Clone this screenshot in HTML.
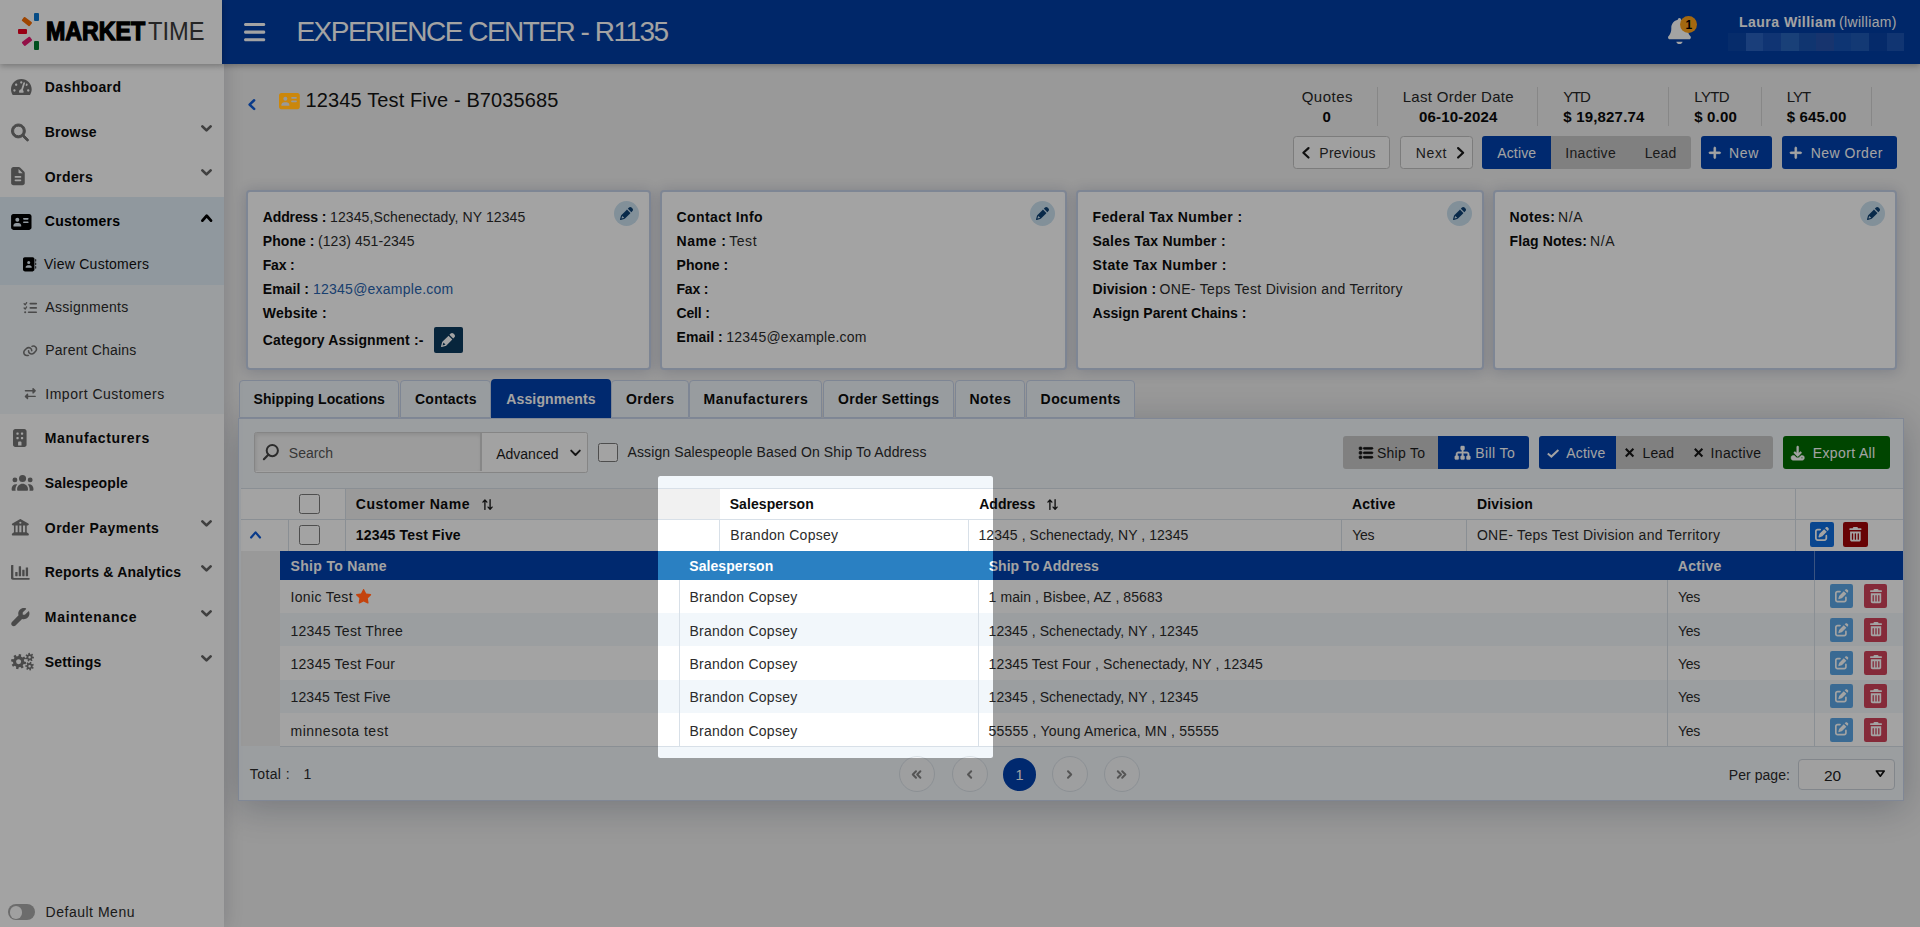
<!DOCTYPE html>
<html lang="en"><head><meta charset="utf-8"><title>MarketTime - Customer Assignments</title>
<style>
html,body{margin:0;padding:0;}
body{width:1920px;height:927px;overflow:hidden;position:relative;background:#efefef;font-family:"Liberation Sans",sans-serif;font-size:14px;}
svg{display:block;overflow:visible;}
</style></head><body>
<nav style="position:absolute;left:0px;top:0px;width:223.6px;height:927px;background:#fff;box-shadow:0 0 18px rgba(0,0,30,.17);z-index:3;"><div style="position:absolute;left:0px;top:197.4px;width:224px;height:87.7px;background:#e2eef8;"></div><div style="position:absolute;left:0px;top:285.1px;width:224px;height:128.9px;background:#f3f7fa;"></div><svg style="position:absolute;left:11.1px;top:78.9px;width:20.7px;height:16.1px;" viewBox="0 32 576 448" preserveAspectRatio="xMidYMid meet"><path fill="#757575" d="M288 32C128.94 32 0 160.94 0 320c0 52.8 14.25 102.26 39.06 144.8 5.61 9.62 16.3 15.2 27.44 15.2h443c11.14 0 21.83-5.58 27.44-15.2C561.75 422.26 576 372.8 576 320c0-159.06-128.94-288-288-288zm0 64c14.71 0 26.58 10.13 30.32 23.65-1.11 2.26-2.64 4.23-3.45 6.67l-9.22 27.67c-5.13 3.49-10.97 6.01-17.64 6.01-17.67 0-32-14.33-32-32S270.33 96 288 96zM96 384c-17.67 0-32-14.33-32-32s14.33-32 32-32 32 14.33 32 32-14.33 32-32 32zm48-160c-17.67 0-32-14.33-32-32s14.33-32 32-32 32 14.33 32 32-14.33 32-32 32zm246.77-72.41l-61.33 184C343.13 347.33 352 364.54 352 384c0 11.72-3.38 22.55-8.88 32H232.88c-5.5-9.45-8.88-20.28-8.88-32 0-33.94 26.5-61.43 59.9-63.59l61.34-184.01c4.17-12.56 17.73-19.45 30.36-15.17 12.57 4.19 19.35 17.79 15.17 30.36zm14.66 57.2l15.52-46.55c3.47-1.29 7.13-2.23 11.05-2.23 17.67 0 32 14.33 32 32s-14.33 32-32 32c-11.38-.01-20.89-6.28-26.57-15.22zM480 384c-17.67 0-32-14.33-32-32s14.33-32 32-32 32 14.33 32 32-14.33 32-32 32z"/></svg><span style="position:absolute;left:44.8px;top:77.2px;line-height:20px;font-size:14px;font-weight:700;color:#0c0c0c;white-space:pre;letter-spacing:0.383px;">Dashboard</span><svg style="position:absolute;left:11.4px;top:123.7px;width:18.0px;height:17.1px;" viewBox="0 0 511.97 512.08" preserveAspectRatio="xMidYMid meet"><path fill="#757575" d="M416 208c0 45.9-14.9 88.3-40 122.7l126.6 126.7c12.5 12.5 12.5 32.8 0 45.3s-32.8 12.5-45.3 0L330.7 376c-34.4 25.1-76.8 40-122.7 40C93.1 416 0 322.9 0 208S93.1 0 208 0s208 93.1 208 208M208 352a144 144 0 1 0 0-288 144 144 0 1 0 0 288" stroke="#757575" stroke-width="28" stroke-linejoin="round"/></svg><span style="position:absolute;left:44.8px;top:122.0px;line-height:20px;font-size:14px;font-weight:700;color:#0c0c0c;white-space:pre;letter-spacing:0.216px;">Browse</span><svg style="position:absolute;left:201.0px;top:124.6px;width:11.0px;height:7.1px" viewBox="0 0 11.0 7.1"><path d="M1.35 1.35L5.5 5.4125L9.65 1.35" fill="none" stroke="#646464" stroke-width="2.7" stroke-linecap="round" stroke-linejoin="round"/></svg><svg style="position:absolute;left:11.3px;top:167.4px;width:13.9px;height:18.2px;" viewBox="0 0 384 512" preserveAspectRatio="xMidYMid meet"><path fill="#757575" d="M0 64C0 28.7 28.7 0 64 0h149.5c17 0 33.3 6.7 45.3 18.7l106.5 106.6c12 12 18.7 28.3 18.7 45.3V448c0 35.3-28.7 64-64 64H64c-35.3 0-64-28.7-64-64zm208-5.5V152c0 13.3 10.7 24 24 24h93.5zM120 256c-13.3 0-24 10.7-24 24s10.7 24 24 24h144c13.3 0 24-10.7 24-24s-10.7-24-24-24zm0 96c-13.3 0-24 10.7-24 24s10.7 24 24 24h144c13.3 0 24-10.7 24-24s-10.7-24-24-24z"/></svg><span style="position:absolute;left:44.8px;top:166.7px;line-height:20px;font-size:14px;font-weight:700;color:#0c0c0c;white-space:pre;letter-spacing:0.406px;">Orders</span><svg style="position:absolute;left:201.0px;top:169.3px;width:11.0px;height:7.1px" viewBox="0 0 11.0 7.1"><path d="M1.35 1.35L5.5 5.4125L9.65 1.35" fill="none" stroke="#646464" stroke-width="2.7" stroke-linecap="round" stroke-linejoin="round"/></svg><svg style="position:absolute;left:11.4px;top:213.9px;width:20.6px;height:15.9px;" viewBox="0 32 576 448" preserveAspectRatio="xMidYMid meet"><path fill="#000" d="M64 32C28.7 32 0 60.7 0 96v320c0 35.3 28.7 64 64 64h448c35.3 0 64-28.7 64-64V96c0-35.3-28.7-64-64-64zm80 256h64c44.2 0 80 35.8 80 80 0 8.8-7.2 16-16 16H80c-8.8 0-16-7.2-16-16 0-44.2 35.8-80 80-80m-24-96a56 56 0 1 1 112 0 56 56 0 1 1-112 0m240-48h112c13.3 0 24 10.7 24 24s-10.7 24-24 24H360c-13.3 0-24-10.7-24-24s10.7-24 24-24m0 96h112c13.3 0 24 10.7 24 24s-10.7 24-24 24H360c-13.3 0-24-10.7-24-24s10.7-24 24-24"/></svg><span style="position:absolute;left:44.8px;top:211.4px;line-height:20px;font-size:14px;font-weight:700;color:#000;white-space:pre;letter-spacing:0.254px;">Customers</span><svg style="position:absolute;left:201.0px;top:213.8px;width:11.4px;height:8.0px" viewBox="0 0 11.4 8.0"><path d="M1.4 6.6L5.7 1.75L10.0 6.6" fill="none" stroke="#000" stroke-width="2.8" stroke-linecap="round" stroke-linejoin="round"/></svg><svg style="position:absolute;left:11.6px;top:428.5px;width:15.6px;height:18.1px;" viewBox="0 0 384 512" preserveAspectRatio="xMidYMid meet"><path fill="#757575" d="M64 0C28.7 0 0 28.7 0 64v384c0 35.3 28.7 64 64 64h256c35.3 0 64-28.7 64-64V64c0-35.3-28.7-64-64-64zm112 352h32c17.7 0 32 14.3 32 32v80h-96v-80c0-17.7 14.3-32 32-32M96 112c0-8.8 7.2-16 16-16h32c8.8 0 16 7.2 16 16v32c0 8.8-7.2 16-16 16h-32c-8.8 0-16-7.2-16-16zm144-16h32c8.8 0 16 7.2 16 16v32c0 8.8-7.2 16-16 16h-32c-8.8 0-16-7.2-16-16v-32c0-8.8 7.2-16 16-16M96 240c0-8.8 7.2-16 16-16h32c8.8 0 16 7.2 16 16v32c0 8.8-7.2 16-16 16h-32c-8.8 0-16-7.2-16-16zm144-16h32c8.8 0 16 7.2 16 16v32c0 8.8-7.2 16-16 16h-32c-8.8 0-16-7.2-16-16v-32c0-8.8 7.2-16 16-16"/></svg><span style="position:absolute;left:44.8px;top:428.0px;line-height:20px;font-size:14px;font-weight:700;color:#0c0c0c;white-space:pre;letter-spacing:0.658px;">Manufacturers</span><svg style="position:absolute;left:11.1px;top:474.8px;width:23.1px;height:15.8px;" viewBox="0 16 640 464" preserveAspectRatio="xMidYMid meet"><path fill="#757575" d="M320 16a104 104 0 1 1 0 208 104 104 0 1 1 0-208M96 88a72 72 0 1 1 0 144 72 72 0 1 1 0-144M0 416c0-70.7 57.3-128 128-128 12.8 0 25.2 1.9 36.9 5.4C132 330.2 112 378.8 112 432v16c0 11.4 2.4 22.2 6.7 32H32c-17.7 0-32-14.3-32-32zm521.3 64c4.3-9.8 6.7-20.6 6.7-32v-16c0-53.2-20-101.8-52.9-138.6 11.7-3.5 24.1-5.4 36.9-5.4 70.7 0 128 57.3 128 128v32c0 17.7-14.3 32-32 32zM472 160a72 72 0 1 1 144 0 72 72 0 1 1-144 0M160 432c0-88.4 71.6-160 160-160s160 71.6 160 160v16c0 17.7-14.3 32-32 32H192c-17.7 0-32-14.3-32-32z"/></svg><span style="position:absolute;left:44.8px;top:472.8px;line-height:20px;font-size:14px;font-weight:700;color:#0c0c0c;white-space:pre;letter-spacing:0.117px;">Salespeople</span><svg style="position:absolute;left:11.1px;top:519.3px;width:18.7px;height:16.5px;" viewBox="-0.06 16 512.06 496" preserveAspectRatio="xMidYMid meet"><path fill="#757575" d="M271.9 20.2c-9.8-5.6-21.9-5.6-31.8 0l-224 128c-12.6 7.2-18.8 22-15.1 36S17.5 208 32 208h32v208l-51.2 38.4C4.7 460.4 0 469.9 0 480c0 17.7 14.3 32 32 32h448c17.7 0 32-14.3 32-32 0-10.1-4.7-19.6-12.8-25.6L448 416V208h32c14.5 0 27.2-9.8 30.9-23.8s-2.5-28.8-15.1-36l-224-128zM400 208v208h-64V208zm-112 0v208h-64V208zm-112 0v208h-64V208zm80-112a32 32 0 1 1 0 64 32 32 0 1 1 0-64"/></svg><span style="position:absolute;left:44.8px;top:517.6px;line-height:20px;font-size:14px;font-weight:700;color:#0c0c0c;white-space:pre;letter-spacing:0.456px;">Order Payments</span><svg style="position:absolute;left:201.0px;top:520.2px;width:11.0px;height:7.1px" viewBox="0 0 11.0 7.1"><path d="M1.35 1.35L5.5 5.4125L9.65 1.35" fill="none" stroke="#646464" stroke-width="2.7" stroke-linecap="round" stroke-linejoin="round"/></svg><svg style="position:absolute;left:11.1px;top:564.9px;width:18.7px;height:14.8px;" viewBox="0 64 512 400" preserveAspectRatio="xMidYMid meet"><path fill="#757575" d="M32 64h32v336c0 8.800 7.200 16 16 16h416c8.800 0 16 7.200 16 16v16c0 8.800-7.200 16-16 16H48c-26.500 0-48-21.500-48-48V80c0-8.800 7.200-16 16-16zM128 256h40c8 0 12 4 12 12v88c0 8-4 12-12 12h-40c-8 0-12-4-12-12v-88c0-8 4-12 12-12zM224 96h40c8 0 12 4 12 12v248c0 8-4 12-12 12h-40c-8 0-12-4-12-12V108c0-8 4-12 12-12zM320 192h40c8 0 12 4 12 12v152c0 8-4 12-12 12h-40c-8 0-12-4-12-12V204c0-8 4-12 12-12zM416 128h40c8 0 12 4 12 12v216c0 8-4 12-12 12h-40c-8 0-12-4-12-12V140c0-8 4-12 12-12z"/></svg><span style="position:absolute;left:44.8px;top:562.4px;line-height:20px;font-size:14px;font-weight:700;color:#0c0c0c;white-space:pre;letter-spacing:0.209px;">Reports &amp; Analytics</span><svg style="position:absolute;left:201.0px;top:565.0px;width:11.0px;height:7.1px" viewBox="0 0 11.0 7.1"><path d="M1.35 1.35L5.5 5.4125L9.65 1.35" fill="none" stroke="#646464" stroke-width="2.7" stroke-linecap="round" stroke-linejoin="round"/></svg><svg style="position:absolute;left:11.1px;top:607.6px;width:18.7px;height:18.2px;" viewBox="24.02 0 519.98 519.97" preserveAspectRatio="xMidYMid meet"><path fill="#757575" d="M509.4 98.6c7.6-7.6 20.3-5.7 24.1 4.3 6.8 17.7 10.5 37 10.5 57.1 0 88.4-71.6 160-160 160-17.5 0-34.4-2.8-50.2-8L146.9 498.9c-28.1 28.1-73.7 28.1-101.8 0s-28.1-73.7 0-101.8L232 210.2c-5.2-15.8-8-32.6-8-50.2C224 71.6 295.6 0 384 0c20.1 0 39.4 3.7 57.1 10.5 10 3.8 11.8 16.5 4.3 24.1l-88.7 88.7c-3 3-4.7 7.1-4.7 11.3V176c0 8.8 7.2 16 16 16h41.4c4.2 0 8.3-1.7 11.3-4.7z"/></svg><span style="position:absolute;left:44.8px;top:607.2px;line-height:20px;font-size:14px;font-weight:700;color:#0c0c0c;white-space:pre;letter-spacing:0.7px;">Maintenance</span><svg style="position:absolute;left:201.0px;top:609.8px;width:11.0px;height:7.1px" viewBox="0 0 11.0 7.1"><path d="M1.35 1.35L5.5 5.4125L9.65 1.35" fill="none" stroke="#646464" stroke-width="2.7" stroke-linecap="round" stroke-linejoin="round"/></svg><svg style="position:absolute;left:11.0px;top:653.0px;width:23.2px;height:17.4px" viewBox="0 0 23.2 17.4"><path fill="#757575" fill-rule="evenodd" d="M13.20 8.50L15.19 9.03L14.72 11.36L12.68 11.06L11.70 12.52L12.74 14.30L10.76 15.61L9.52 13.96L7.80 14.30L7.27 16.29L4.94 15.82L5.24 13.78L3.78 12.80L2.00 13.84L0.69 11.86L2.34 10.62L2.00 8.90L0.01 8.37L0.48 6.04L2.52 6.34L3.50 4.88L2.46 3.10L4.44 1.79L5.68 3.44L7.40 3.10L7.93 1.11L10.26 1.58L9.96 3.62L11.42 4.60L13.20 3.56L14.51 5.54L12.86 6.78ZM10.10 8.70A2.50 2.50 0 1 0 5.10 8.70A2.50 2.50 0 1 0 10.10 8.70ZM21.66 3.68L22.99 3.85L22.83 5.41L21.49 5.32L20.91 6.26L21.61 7.41L20.29 8.26L19.53 7.16L18.43 7.30L17.96 8.55L16.48 8.05L16.87 6.77L16.07 6.00L14.80 6.42L14.26 4.94L15.51 4.45L15.62 3.34L14.50 2.61L15.32 1.27L16.48 1.94L17.41 1.34L17.28 0.00L18.84 -0.19L19.05 1.13L20.10 1.49L21.06 0.55L22.19 1.65L21.28 2.64ZM19.85 4.20A1.25 1.25 0 1 0 17.35 4.20A1.25 1.25 0 1 0 19.85 4.20ZM21.62 13.91L22.78 14.59L22.02 15.97L20.83 15.36L19.93 16.00L20.12 17.33L18.57 17.60L18.30 16.29L17.24 15.98L16.32 16.96L15.14 15.92L16.00 14.89L15.57 13.87L14.24 13.76L14.32 12.19L15.66 12.22L16.19 11.25L15.44 10.14L16.72 9.22L17.53 10.29L18.62 10.10L19.02 8.82L20.53 9.25L20.21 10.55L21.04 11.28L22.29 10.80L22.90 12.25L21.67 12.80ZM19.85 13.20A1.25 1.25 0 1 0 17.35 13.20A1.25 1.25 0 1 0 19.85 13.20Z"/></svg><span style="position:absolute;left:44.8px;top:652.0px;line-height:20px;font-size:14px;font-weight:700;color:#0c0c0c;white-space:pre;letter-spacing:0.179px;">Settings</span><svg style="position:absolute;left:201.0px;top:654.6px;width:11.0px;height:7.1px" viewBox="0 0 11.0 7.1"><path d="M1.35 1.35L5.5 5.4125L9.65 1.35" fill="none" stroke="#646464" stroke-width="2.7" stroke-linecap="round" stroke-linejoin="round"/></svg><svg style="position:absolute;left:23.0px;top:257.0px;width:13.2px;height:14.7px;" viewBox="32 0 480 512" preserveAspectRatio="xMidYMid meet"><path fill="#000" d="M96 0C60.7 0 32 28.7 32 64v384c0 35.3 28.7 64 64 64h288c35.3 0 64-28.7 64-64V64c0-35.3-28.7-64-64-64zm112 288h64c44.2 0 80 35.8 80 80 0 8.8-7.2 16-16 16H144c-8.8 0-16-7.2-16-16 0-44.2 35.8-80 80-80m-24-96a56 56 0 1 1 112 0 56 56 0 1 1-112 0M512 80c0-8.8-7.2-16-16-16s-16 7.2-16 16v64c0 8.8 7.2 16 16 16s16-7.2 16-16zm0 128c0-8.8-7.2-16-16-16s-16 7.2-16 16v64c0 8.8 7.2 16 16 16s16-7.2 16-16zm-16 112c-8.8 0-16 7.2-16 16v64c0 8.8 7.2 16 16 16s16-7.2 16-16v-64c0-8.8-7.2-16-16-16"/></svg><span style="position:absolute;left:44.0px;top:254.2px;line-height:20px;font-size:14px;font-weight:400;color:#111;white-space:pre;letter-spacing:0.251px;">View Customers</span><svg style="position:absolute;left:23.3px;top:301.7px;width:14.6px;height:11.3px;" viewBox="-0.05 31.95 512.05 424.05" preserveAspectRatio="xMidYMid meet"><path fill="#757575" d="M133.8 36.3c10.9 7.6 13.5 22.6 5.9 33.4l-56 80c-4.1 5.8-10.5 9.5-17.6 10.1S52 158 47 153L7 113c-9.3-9.4-9.3-24.6 0-34s24.6-9.3 34 0l19.8 19.8 39.6-56.6c7.6-10.9 22.6-13.5 33.4-5.9m0 160c10.9 7.6 13.5 22.6 5.9 33.4l-56 80c-4.1 5.8-10.5 9.5-17.6 10.1S52 318 47 313L7 273c-9.4-9.4-9.4-24.6 0-33.9s24.6-9.4 33.9 0l19.8 19.8 39.6-56.6c7.6-10.9 22.6-13.5 33.4-5.9zM224 96c0-17.7 14.3-32 32-32h224c17.7 0 32 14.3 32 32s-14.3 32-32 32H256c-17.7 0-32-14.3-32-32m0 160c0-17.7 14.3-32 32-32h224c17.7 0 32 14.3 32 32s-14.3 32-32 32H256c-17.7 0-32-14.3-32-32m-64 160c0-17.7 14.3-32 32-32h288c17.7 0 32 14.3 32 32s-14.3 32-32 32H192c-17.7 0-32-14.3-32-32m-96-40a40 40 0 1 1 0 80 40 40 0 1 1 0-80"/></svg><span style="position:absolute;left:45.3px;top:297.2px;line-height:20px;font-size:14px;font-weight:400;color:#2b2b2b;white-space:pre;letter-spacing:0.284px;">Assignments</span><svg style="position:absolute;left:23.3px;top:343.7px;width:14.3px;height:13.6px;" viewBox="0 32.0 576 448.2" preserveAspectRatio="xMidYMid meet"><path fill="#757575" d="M419.5 96c-16.6 0-32.7 4.5-46.8 12.7-15.8-16-34.2-29.4-54.5-39.5 28.2-24 64.1-37.2 101.3-37.2C505.9 32 576 102 576 188.5c0 41.5-16.5 81.3-45.8 110.6l-71.1 71.1C429.8 399.5 390 416 348.5 416 262.1 416 192 346 192 259.5c0-1.5 0-3 .1-4.5.5-17.7 15.2-31.6 32.9-31.1s31.6 15.2 31.1 32.9v2.6c0 51.1 41.4 92.5 92.5 92.5 24.5 0 48-9.7 65.4-27.1l71.1-71.1c17.3-17.3 27.1-40.9 27.1-65.4 0-51.1-41.4-92.5-92.5-92.5zm-144.3 77.3c-1.9-.8-3.8-1.9-5.5-3.1-12.6-6.5-27-10.2-42.1-10.2-24.5 0-48 9.7-65.4 27.1l-71.1 71.1C73.8 275.5 64 299.1 64 323.6c0 51.1 41.4 92.5 92.5 92.5 16.5 0 32.6-4.4 46.7-12.6 15.8 16 34.2 29.4 54.6 39.5-28.2 23.9-64 37.2-101.3 37.2C70.1 480.2 0 410.2 0 323.7c0-41.5 16.5-81.3 45.8-110.6l71.1-71.1c29.3-29.3 69.1-45.8 110.6-45.8 86.6 0 156.5 70.6 156.5 156.9v3.9c-.4 17.7-15.1 31.6-32.8 31.2s-31.6-15.1-31.2-32.8v-2.3c0-33.7-18-63.3-44.8-79.6z"/></svg><span style="position:absolute;left:45.3px;top:340.3px;line-height:20px;font-size:14px;font-weight:400;color:#2b2b2b;white-space:pre;letter-spacing:0.189px;">Parent Chains</span><svg style="position:absolute;left:23.3px;top:388.0px;width:14.6px;height:11.2px;" viewBox="-0.07 -0.06 512.15 512.11" preserveAspectRatio="xMidYMid meet"><path fill="#757575" d="m502.6 150.6-96 96c-9.2 9.2-22.9 11.9-34.9 6.9S352 236.9 352 224v-64H32c-17.7 0-32-14.3-32-32s14.3-32 32-32h320V32c0-12.9 7.8-24.6 19.8-29.6s25.7-2.2 34.9 6.9l96 96c12.5 12.5 12.5 32.8 0 45.3zm-397.3 352-96-96c-12.5-12.5-12.5-32.8 0-45.3l96-96c9.2-9.2 22.9-11.9 34.9-6.9S160 275.1 160 288v64h320c17.7 0 32 14.3 32 32s-14.3 32-32 32H160v64c0 12.9-7.8 24.6-19.8 29.6s-25.7 2.2-34.9-6.9z"/></svg><span style="position:absolute;left:45.3px;top:383.5px;line-height:20px;font-size:14px;font-weight:400;color:#2b2b2b;white-space:pre;letter-spacing:0.511px;">Import Customers</span><div style="position:absolute;left:7.5px;top:904.4px;width:27.9px;height:15.9px;background:#a9a9a9;border-radius:8px;"></div><div style="position:absolute;left:9.6px;top:906.2px;width:12.6px;height:12.4px;background:#fbfbfb;border-radius:50%;"></div><span style="position:absolute;left:45.6px;top:902.4px;line-height:20px;font-size:14px;font-weight:400;color:#2b2b2b;white-space:pre;letter-spacing:0.51px;">Default Menu</span></nav><div style="position:absolute;left:0px;top:0px;width:222.4px;height:63.6px;background:#fff;box-shadow:0 2px 6px rgba(0,0,0,.28);z-index:5;"><div style="position:absolute;left:34.15px;top:12.8px;width:4.7px;height:8.4px;background:#0a78d2;transform:rotate(0deg);border-radius:1px;"></div><div style="position:absolute;left:22.099999999999998px;top:18.8px;width:9.6px;height:4.8px;background:#f86c00;transform:rotate(38deg);border-radius:1px;"></div><div style="position:absolute;left:17.8px;top:29.099999999999998px;width:9.0px;height:4.6px;background:#ee0020;transform:rotate(0deg);border-radius:1px;"></div><div style="position:absolute;left:22.0px;top:38.6px;width:9.6px;height:4.8px;background:#e61a70;transform:rotate(-38deg);border-radius:1px;"></div><div style="position:absolute;left:34.15px;top:41.0px;width:4.7px;height:8.8px;background:#007c2e;transform:rotate(0deg);border-radius:1px;"></div><span style="position:absolute;left:46px;top:16.2px;line-height:30px;font-size:26.6px;font-weight:700;color:#000;transform-origin:0 50%;transform:scaleX(.872);-webkit-text-stroke:1.35px #000;white-space:pre;">MARKET</span><span style="position:absolute;left:148.2px;top:16.2px;line-height:30px;font-size:26.6px;font-weight:400;color:#3a3a3a;transform-origin:0 50%;transform:scaleX(.892);white-space:pre;">TIME</span></div><header style="position:absolute;left:222.4px;top:0px;width:1697.6px;height:63.6px;background:#003da5;box-shadow:0 2px 6px rgba(0,0,0,.28);z-index:4;"><svg style="position:absolute;left:21.6px;top:22.5px;width:21.3px;height:18.3px;" viewBox="0 64 448 384" preserveAspectRatio="none"><path fill="#fff" d="M0 96c0-17.7 14.3-32 32-32h384c17.7 0 32 14.3 32 32s-14.3 32-32 32H32c-17.7 0-32-14.3-32-32m0 160c0-17.7 14.3-32 32-32h384c17.7 0 32 14.3 32 32s-14.3 32-32 32H32c-17.7 0-32-14.3-32-32m448 160c0 17.7-14.3 32-32 32H32c-17.7 0-32-14.3-32-32s14.3-32 32-32h384c17.7 0 32 14.3 32 32"/></svg><span style="position:absolute;left:74.0px;top:14.2px;line-height:36px;font-size:28px;font-weight:400;color:#fff;white-space:pre;letter-spacing:-1.498px;">EXPERIENCE CENTER - R1135</span><svg style="position:absolute;left:1446.0px;top:17.7px;width:22.9px;height:26.1px;" viewBox="-0.0 0 447.9 512" preserveAspectRatio="xMidYMid meet"><path fill="#fff" d="M224 0c-17.7 0-32 14.3-32 32v3.2C119 50 64 114.6 64 192v21.7c0 48.1-16.4 94.8-46.4 132.4l-9.8 12.2C2.7 364.6 0 372.4 0 380.5 0 400.1 15.9 416 35.5 416h376.9c19.6 0 35.5-15.9 35.5-35.5 0-8.1-2.7-15.9-7.8-22.2l-9.8-12.2c-29.9-37.6-46.3-84.3-46.3-132.4V192c0-77.4-55-142-128-156.8V32c0-17.7-14.3-32-32-32m-62 464c7.1 27.6 32.2 48 62 48s54.9-20.4 62-48z"/></svg><div style="position:absolute;left:1457.6px;top:16.2px;width:17.4px;height:17.2px;background:#ffa31a;border-radius:50%;"></div><span style="position:absolute;left:1463.2px;top:17.9px;line-height:14px;font-size:12px;font-weight:700;color:#000;white-space:pre;">1</span><span style="position:absolute;left:1516.5px;top:12.3px;line-height:20px;font-size:14px;font-weight:700;color:#fff;white-space:pre;letter-spacing:0.496px;">Laura William</span><span style="position:absolute;left:1616.6px;top:12.3px;line-height:20px;font-size:14px;font-weight:400;color:#fff;white-space:pre;letter-spacing:0.344px;">(lwilliam)</span><div style="position:absolute;left:1505.8px;top:33.2px;width:17.9px;height:17.6px;background:#0a45a8;"></div><div style="position:absolute;left:1523.3999999999999px;top:33.2px;width:17.9px;height:17.6px;background:#2a62bf;"></div><div style="position:absolute;left:1541.0px;top:33.2px;width:17.9px;height:17.6px;background:#1a52b4;"></div><div style="position:absolute;left:1558.6px;top:33.2px;width:17.9px;height:17.6px;background:#2864bc;"></div><div style="position:absolute;left:1576.2px;top:33.2px;width:17.9px;height:17.6px;background:#1a54b0;"></div><div style="position:absolute;left:1593.8px;top:33.2px;width:17.9px;height:17.6px;background:#2452ad;"></div><div style="position:absolute;left:1611.3999999999999px;top:33.2px;width:17.9px;height:17.6px;background:#1654b4;"></div><div style="position:absolute;left:1629.0px;top:33.2px;width:17.9px;height:17.6px;background:#1e5ab6;"></div><div style="position:absolute;left:1646.6px;top:33.2px;width:17.9px;height:17.6px;background:#0842a7;"></div><div style="position:absolute;left:1664.2px;top:33.2px;width:17.9px;height:17.6px;background:#1c54b3;"></div></header><main style="position:absolute;left:0;top:0;width:1920px;height:927px;"><svg style="position:absolute;left:248.0px;top:99.2px;width:7.4px;height:11.2px" viewBox="0 0 7.4 11.2"><path d="M6.15 1.25L1.5625 5.6L6.15 9.95" fill="none" stroke="#0f5cd8" stroke-width="2.5" stroke-linecap="round" stroke-linejoin="round"/></svg><svg style="position:absolute;left:279.2px;top:92.8px;width:20.8px;height:16.2px;z-index:60;" viewBox="0 32 576 448" preserveAspectRatio="xMidYMid meet"><path fill="#cb870c" d="M64 32C28.7 32 0 60.7 0 96v320c0 35.3 28.7 64 64 64h448c35.3 0 64-28.7 64-64V96c0-35.3-28.7-64-64-64zm80 256h64c44.2 0 80 35.8 80 80 0 8.8-7.2 16-16 16H80c-8.8 0-16-7.2-16-16 0-44.2 35.8-80 80-80m-24-96a56 56 0 1 1 112 0 56 56 0 1 1-112 0m240-48h112c13.3 0 24 10.7 24 24s-10.7 24-24 24H360c-13.3 0-24-10.7-24-24s10.7-24 24-24m0 96h112c13.3 0 24 10.7 24 24s-10.7 24-24 24H360c-13.3 0-24-10.7-24-24s10.7-24 24-24"/></svg><span style="position:absolute;left:305.6px;top:86.3px;line-height:28px;font-size:20px;font-weight:400;color:#141414;white-space:pre;letter-spacing:0.122px;">12345 Test Five - B7035685</span><span style="position:absolute;left:1301.7px;top:87.4px;line-height:20px;font-size:15px;font-weight:400;color:#262626;white-space:pre;letter-spacing:0.487px;">Quotes</span><span style="position:absolute;left:1322.4px;top:107.4px;line-height:20px;font-size:15px;font-weight:700;color:#0a0a0a;white-space:pre;letter-spacing:0.234px;">0</span><span style="position:absolute;left:1402.7px;top:87.4px;line-height:20px;font-size:15px;font-weight:400;color:#262626;white-space:pre;letter-spacing:0.305px;">Last Order Date</span><span style="position:absolute;left:1419.0px;top:107.4px;line-height:20px;font-size:15px;font-weight:700;color:#0a0a0a;white-space:pre;letter-spacing:0.172px;">06-10-2024</span><span style="position:absolute;left:1563.3px;top:87.4px;line-height:20px;font-size:15px;font-weight:400;color:#262626;white-space:pre;letter-spacing:-1.227px;">YTD</span><span style="position:absolute;left:1563.3px;top:107.4px;line-height:20px;font-size:15px;font-weight:700;color:#0a0a0a;white-space:pre;letter-spacing:0.183px;">$ 19,827.74</span><span style="position:absolute;left:1694.3px;top:87.4px;line-height:20px;font-size:15px;font-weight:400;color:#262626;white-space:pre;letter-spacing:-0.62px;">LYTD</span><span style="position:absolute;left:1694.3px;top:107.4px;line-height:20px;font-size:15px;font-weight:700;color:#0a0a0a;white-space:pre;letter-spacing:0.153px;">$ 0.00</span><span style="position:absolute;left:1786.7px;top:87.4px;line-height:20px;font-size:15px;font-weight:400;color:#262626;white-space:pre;letter-spacing:-0.961px;">LYT</span><span style="position:absolute;left:1786.7px;top:107.4px;line-height:20px;font-size:15px;font-weight:700;color:#0a0a0a;white-space:pre;letter-spacing:0.179px;">$ 645.00</span><div style="position:absolute;left:1376.5px;top:86.7px;width:1.0px;height:39.3px;background:#d4d4d4;"></div><div style="position:absolute;left:1537.2px;top:86.7px;width:1.0px;height:39.3px;background:#d4d4d4;"></div><div style="position:absolute;left:1668.2px;top:86.7px;width:1.0px;height:39.3px;background:#d4d4d4;"></div><div style="position:absolute;left:1760.5px;top:86.7px;width:1.0px;height:39.3px;background:#d4d4d4;"></div><div style="position:absolute;left:1870.5px;top:86.7px;width:1.0px;height:39.3px;background:#d4d4d4;"></div><div style="position:absolute;left:1293.3px;top:136.4px;width:97.0px;height:33.0px;background:#fbfbfb;border:1.6px solid #c2c2c2;border-radius:3.5px;box-sizing:border-box;"></div><svg style="position:absolute;left:1301.7px;top:147.1px;width:7.6px;height:11.6px" viewBox="0 0 7.6 11.6"><path d="M6.5 1.1L1.375 5.8L6.5 10.5" fill="none" stroke="#1a1a1a" stroke-width="2.2" stroke-linecap="round" stroke-linejoin="round"/></svg><span style="position:absolute;left:1319.3px;top:143.0px;line-height:20px;font-size:14px;font-weight:400;color:#2b2b2b;white-space:pre;letter-spacing:0.25px;">Previous</span><div style="position:absolute;left:1400.3px;top:136.4px;width:72.4px;height:33.0px;background:#fbfbfb;border:1.6px solid #c2c2c2;border-radius:3.5px;box-sizing:border-box;"></div><span style="position:absolute;left:1415.7px;top:143.0px;line-height:20px;font-size:14px;font-weight:400;color:#2b2b2b;white-space:pre;letter-spacing:0.646px;">Next</span><svg style="position:absolute;left:1456.7px;top:147.1px;width:7.5px;height:11.6px" viewBox="0 0 7.5 11.6"><path d="M1.1 1.1L6.125 5.8L1.1 10.5" fill="none" stroke="#1a1a1a" stroke-width="2.2" stroke-linecap="round" stroke-linejoin="round"/></svg><div style="position:absolute;left:1482.3px;top:136.4px;width:209.0px;height:33.0px;background:#c9c9c9;border-radius:3px;"></div><div style="position:absolute;left:1482.3px;top:136.4px;width:68.4px;height:33.0px;background:#0040ae;border-radius:3px 0 0 3px;"></div><span style="position:absolute;left:1497.2px;top:143.0px;line-height:20px;font-size:14px;font-weight:400;color:#fff;white-space:pre;letter-spacing:0.163px;">Active</span><span style="position:absolute;left:1565.3px;top:143.0px;line-height:20px;font-size:14px;font-weight:400;color:#2b2b2b;white-space:pre;letter-spacing:0.304px;">Inactive</span><span style="position:absolute;left:1644.7px;top:143.0px;line-height:20px;font-size:14px;font-weight:400;color:#2b2b2b;white-space:pre;letter-spacing:0.12px;">Lead</span><div style="position:absolute;left:1701.3px;top:136.4px;width:71.0px;height:33.0px;background:#0040ae;border-radius:3px;"></div><svg style="position:absolute;left:1708.8px;top:147.1px;width:11.6px;height:11.6px;" viewBox="0 32 448 448" preserveAspectRatio="xMidYMid meet"><path fill="#fff" d="M256 64c0-17.7-14.3-32-32-32s-32 14.3-32 32v160H32c-17.7 0-32 14.3-32 32s14.3 32 32 32h160v160c0 17.7 14.3 32 32 32s32-14.3 32-32V288h160c17.7 0 32-14.3 32-32s-14.3-32-32-32H256z" stroke="#fff" stroke-width="34" stroke-linejoin="round"/></svg><span style="position:absolute;left:1729.0px;top:143.0px;line-height:20px;font-size:14px;font-weight:400;color:#fff;white-space:pre;letter-spacing:0.625px;">New</span><div style="position:absolute;left:1782.3px;top:136.4px;width:114.4px;height:33.0px;background:#0040ae;border-radius:3px;"></div><svg style="position:absolute;left:1790.2px;top:147.1px;width:11.6px;height:11.6px;" viewBox="0 32 448 448" preserveAspectRatio="xMidYMid meet"><path fill="#fff" d="M256 64c0-17.7-14.3-32-32-32s-32 14.3-32 32v160H32c-17.7 0-32 14.3-32 32s14.3 32 32 32h160v160c0 17.7 14.3 32 32 32s32-14.3 32-32V288h160c17.7 0 32-14.3 32-32s-14.3-32-32-32H256z" stroke="#fff" stroke-width="34" stroke-linejoin="round"/></svg><span style="position:absolute;left:1810.7px;top:143.0px;line-height:20px;font-size:14px;font-weight:400;color:#fff;white-space:pre;letter-spacing:0.496px;">New Order</span><div style="position:absolute;left:246.2px;top:190.2px;width:404.5px;height:179.5px;background:#fff;border:2px solid #c6d2e8;box-sizing:border-box;border-radius:4px;box-shadow:0 1px 14px rgba(20,30,80,.20);"></div><div style="position:absolute;left:614.3000000000001px;top:201.25px;width:25.0px;height:25.0px;background:#cbe1f0;border-radius:50%;"></div><svg style="position:absolute;left:620.4px;top:207.15px;width:13.0px;height:13.0px;" viewBox="0.02 -0.6 511.98 512.07" preserveAspectRatio="xMidYMid meet"><path fill="#0f4274" d="M36.4 353.2c4.1-14.6 11.8-27.9 22.6-38.7l181.2-181.2 33.9-33.9 104 104 33.9 33.9-33.9 33.9-181.2 181.2c-10.7 10.7-24.1 18.5-38.7 22.6L30.4 510.6c-8.3 2.3-17.3 0-23.4-6.2S-1.4 489.3.9 481zm55.6-3.7c-4.4 4.7-7.6 10.4-9.3 16.6L58.6 453l86.9-24.1c6.4-1.8 12.2-5.1 17-9.7l-70.6-69.7zm354-146.1-104-104-34-33.9 44.9-44.9C366.4 7 384.8-.6 404-.6s37.6 7.6 51.1 21.2l35.7 35.7c13.6 13.6 21.2 32 21.2 51.1s-7.6 37.6-21.2 51.1l-44.9 44.9z"/></svg><div style="position:absolute;left:660.4px;top:190.2px;width:406.2px;height:179.5px;background:#fff;border:2px solid #c6d2e8;box-sizing:border-box;border-radius:4px;box-shadow:0 1px 14px rgba(20,30,80,.20);"></div><div style="position:absolute;left:1030.1999999999998px;top:201.25px;width:25.0px;height:25.0px;background:#cbe1f0;border-radius:50%;"></div><svg style="position:absolute;left:1036.3px;top:207.15px;width:13.0px;height:13.0px;" viewBox="0.02 -0.6 511.98 512.07" preserveAspectRatio="xMidYMid meet"><path fill="#0f4274" d="M36.4 353.2c4.1-14.6 11.8-27.9 22.6-38.7l181.2-181.2 33.9-33.9 104 104 33.9 33.9-33.9 33.9-181.2 181.2c-10.7 10.7-24.1 18.5-38.7 22.6L30.4 510.6c-8.3 2.3-17.3 0-23.4-6.2S-1.4 489.3.9 481zm55.6-3.7c-4.4 4.7-7.6 10.4-9.3 16.6L58.6 453l86.9-24.1c6.4-1.8 12.2-5.1 17-9.7l-70.6-69.7zm354-146.1-104-104-34-33.9 44.9-44.9C366.4 7 384.8-.6 404-.6s37.6 7.6 51.1 21.2l35.7 35.7c13.6 13.6 21.2 32 21.2 51.1s-7.6 37.6-21.2 51.1l-44.9 44.9z"/></svg><div style="position:absolute;left:1076.4px;top:190.2px;width:407.2px;height:179.5px;background:#fff;border:2px solid #c6d2e8;box-sizing:border-box;border-radius:4px;box-shadow:0 1px 14px rgba(20,30,80,.20);"></div><div style="position:absolute;left:1447.1999999999998px;top:201.25px;width:25.0px;height:25.0px;background:#cbe1f0;border-radius:50%;"></div><svg style="position:absolute;left:1453.3px;top:207.15px;width:13.0px;height:13.0px;" viewBox="0.02 -0.6 511.98 512.07" preserveAspectRatio="xMidYMid meet"><path fill="#0f4274" d="M36.4 353.2c4.1-14.6 11.8-27.9 22.6-38.7l181.2-181.2 33.9-33.9 104 104 33.9 33.9-33.9 33.9-181.2 181.2c-10.7 10.7-24.1 18.5-38.7 22.6L30.4 510.6c-8.3 2.3-17.3 0-23.4-6.2S-1.4 489.3.9 481zm55.6-3.7c-4.4 4.7-7.6 10.4-9.3 16.6L58.6 453l86.9-24.1c6.4-1.8 12.2-5.1 17-9.7l-70.6-69.7zm354-146.1-104-104-34-33.9 44.9-44.9C366.4 7 384.8-.6 404-.6s37.6 7.6 51.1 21.2l35.7 35.7c13.6 13.6 21.2 32 21.2 51.1s-7.6 37.6-21.2 51.1l-44.9 44.9z"/></svg><div style="position:absolute;left:1493.4px;top:190.2px;width:403.4px;height:179.5px;background:#fff;border:2px solid #c6d2e8;box-sizing:border-box;border-radius:4px;box-shadow:0 1px 14px rgba(20,30,80,.20);"></div><div style="position:absolute;left:1860.3999999999999px;top:201.25px;width:25.0px;height:25.0px;background:#cbe1f0;border-radius:50%;"></div><svg style="position:absolute;left:1866.5px;top:207.15px;width:13.0px;height:13.0px;" viewBox="0.02 -0.6 511.98 512.07" preserveAspectRatio="xMidYMid meet"><path fill="#0f4274" d="M36.4 353.2c4.1-14.6 11.8-27.9 22.6-38.7l181.2-181.2 33.9-33.9 104 104 33.9 33.9-33.9 33.9-181.2 181.2c-10.7 10.7-24.1 18.5-38.7 22.6L30.4 510.6c-8.3 2.3-17.3 0-23.4-6.2S-1.4 489.3.9 481zm55.6-3.7c-4.4 4.7-7.6 10.4-9.3 16.6L58.6 453l86.9-24.1c6.4-1.8 12.2-5.1 17-9.7l-70.6-69.7zm354-146.1-104-104-34-33.9 44.9-44.9C366.4 7 384.8-.6 404-.6s37.6 7.6 51.1 21.2l35.7 35.7c13.6 13.6 21.2 32 21.2 51.1s-7.6 37.6-21.2 51.1l-44.9 44.9z"/></svg><span style="position:absolute;left:262.75px;top:206.5px;line-height:20px;font-size:14px;font-weight:700;color:#0c0c0c;white-space:pre;letter-spacing:-0.127px;">Address :</span><span style="position:absolute;left:330.0px;top:206.5px;line-height:20px;font-size:14px;font-weight:400;color:#2b2b2b;white-space:pre;letter-spacing:0.106px;">12345,Schenectady, NY 12345</span><span style="position:absolute;left:262.75px;top:230.5px;line-height:20px;font-size:14px;font-weight:700;color:#0c0c0c;white-space:pre;letter-spacing:0.07px;">Phone :</span><span style="position:absolute;left:318.0px;top:230.5px;line-height:20px;font-size:14px;font-weight:400;color:#2b2b2b;white-space:pre;letter-spacing:0.054px;">(123) 451-2345</span><span style="position:absolute;left:262.75px;top:254.5px;line-height:20px;font-size:14px;font-weight:700;color:#0c0c0c;white-space:pre;letter-spacing:-0.203px;">Fax :</span><span style="position:absolute;left:262.75px;top:278.5px;line-height:20px;font-size:14px;font-weight:700;color:#0c0c0c;white-space:pre;letter-spacing:0.052px;">Email :</span><span style="position:absolute;left:313.0px;top:278.5px;line-height:20px;font-size:14px;font-weight:400;color:#2a64ae;white-space:pre;letter-spacing:0.239px;">12345@example.com</span><span style="position:absolute;left:262.75px;top:302.5px;line-height:20px;font-size:14px;font-weight:700;color:#0c0c0c;white-space:pre;letter-spacing:0.236px;">Website :</span><span style="position:absolute;left:262.75px;top:330.2px;line-height:20px;font-size:14px;font-weight:700;color:#0c0c0c;white-space:pre;letter-spacing:0.156px;">Category Assignment :-</span><div style="position:absolute;left:433.6px;top:326.6px;width:29.6px;height:26.6px;background:#0c3a5e;border-radius:2px;"></div><svg style="position:absolute;left:441.3px;top:333.0px;width:14.0px;height:14.0px;" viewBox="0.02 -0.6 511.98 512.07" preserveAspectRatio="xMidYMid meet"><path fill="#fff" d="M36.4 353.2c4.1-14.6 11.8-27.9 22.6-38.7l181.2-181.2 33.9-33.9 104 104 33.9 33.9-33.9 33.9-181.2 181.2c-10.7 10.7-24.1 18.5-38.7 22.6L30.4 510.6c-8.3 2.3-17.3 0-23.4-6.2S-1.4 489.3.9 481zm55.6-3.7c-4.4 4.7-7.6 10.4-9.3 16.6L58.6 453l86.9-24.1c6.4-1.8 12.2-5.1 17-9.7l-70.6-69.7zm354-146.1-104-104-34-33.9 44.9-44.9C366.4 7 384.8-.6 404-.6s37.6 7.6 51.1 21.2l35.7 35.7c13.6 13.6 21.2 32 21.2 51.1s-7.6 37.6-21.2 51.1l-44.9 44.9z"/></svg><span style="position:absolute;left:676.5px;top:206.5px;line-height:20px;font-size:14px;font-weight:700;color:#0c0c0c;white-space:pre;letter-spacing:0.411px;">Contact Info</span><span style="position:absolute;left:676.5px;top:230.5px;line-height:20px;font-size:14px;font-weight:700;color:#0c0c0c;white-space:pre;letter-spacing:0.562px;">Name :</span><span style="position:absolute;left:729.3px;top:230.5px;line-height:20px;font-size:14px;font-weight:400;color:#2b2b2b;white-space:pre;letter-spacing:0.516px;">Test</span><span style="position:absolute;left:676.5px;top:254.5px;line-height:20px;font-size:14px;font-weight:700;color:#0c0c0c;white-space:pre;letter-spacing:0.07px;">Phone :</span><span style="position:absolute;left:676.5px;top:278.5px;line-height:20px;font-size:14px;font-weight:700;color:#0c0c0c;white-space:pre;letter-spacing:-0.203px;">Fax :</span><span style="position:absolute;left:676.5px;top:302.5px;line-height:20px;font-size:14px;font-weight:700;color:#0c0c0c;white-space:pre;letter-spacing:-0.172px;">Cell :</span><span style="position:absolute;left:676.5px;top:326.5px;line-height:20px;font-size:14px;font-weight:700;color:#0c0c0c;white-space:pre;letter-spacing:0.052px;">Email :</span><span style="position:absolute;left:726.3px;top:326.5px;line-height:20px;font-size:14px;font-weight:400;color:#2b2b2b;white-space:pre;letter-spacing:0.239px;">12345@example.com</span><span style="position:absolute;left:1092.5px;top:206.5px;line-height:20px;font-size:14px;font-weight:700;color:#0c0c0c;white-space:pre;letter-spacing:0.391px;">Federal Tax Number :</span><span style="position:absolute;left:1092.5px;top:230.5px;line-height:20px;font-size:14px;font-weight:700;color:#0c0c0c;white-space:pre;letter-spacing:0.244px;">Sales Tax Number :</span><span style="position:absolute;left:1092.5px;top:254.5px;line-height:20px;font-size:14px;font-weight:700;color:#0c0c0c;white-space:pre;letter-spacing:0.438px;">State Tax Number :</span><span style="position:absolute;left:1092.5px;top:278.5px;line-height:20px;font-size:14px;font-weight:700;color:#0c0c0c;white-space:pre;letter-spacing:0.066px;">Division :</span><span style="position:absolute;left:1159.6px;top:278.5px;line-height:20px;font-size:14px;font-weight:400;color:#2b2b2b;white-space:pre;letter-spacing:0.309px;">ONE- Teps Test Division and Territory</span><span style="position:absolute;left:1092.5px;top:302.5px;line-height:20px;font-size:14px;font-weight:700;color:#0c0c0c;white-space:pre;letter-spacing:0.036px;">Assign Parent Chains :</span><span style="position:absolute;left:1509.5px;top:206.5px;line-height:20px;font-size:14px;font-weight:700;color:#0c0c0c;white-space:pre;letter-spacing:0.359px;">Notes:</span><span style="position:absolute;left:1558.0px;top:206.5px;line-height:20px;font-size:14px;font-weight:400;color:#2b2b2b;white-space:pre;letter-spacing:0.594px;">N/A</span><span style="position:absolute;left:1509.5px;top:230.5px;line-height:20px;font-size:14px;font-weight:700;color:#0c0c0c;white-space:pre;letter-spacing:0.108px;">Flag Notes:</span><span style="position:absolute;left:1590.0px;top:230.5px;line-height:20px;font-size:14px;font-weight:400;color:#2b2b2b;white-space:pre;letter-spacing:0.594px;">N/A</span><div style="position:absolute;left:239.1px;top:379.7px;width:160.25px;height:38.7px;background:#eef4f9;border:1.8px solid #c6d2e8;box-sizing:border-box;border-radius:4px 4px 0 0;z-index:1;"></div><span style="position:absolute;left:253.5px;top:389.4px;line-height:20px;font-size:14px;font-weight:700;color:#0c0c0c;white-space:pre;letter-spacing:0.085px;z-index:2;">Shipping Locations</span><div style="position:absolute;left:400.1px;top:379.7px;width:91.25px;height:38.7px;background:#eef4f9;border:1.8px solid #c6d2e8;box-sizing:border-box;border-radius:4px 4px 0 0;z-index:1;"></div><span style="position:absolute;left:415.0px;top:389.4px;line-height:20px;font-size:14px;font-weight:700;color:#0c0c0c;white-space:pre;letter-spacing:0.237px;z-index:2;">Contacts</span><div style="position:absolute;left:491.3px;top:379.4px;width:119.75px;height:38.8px;background:#0040ae;border-radius:4px 4px 0 0;z-index:1;"></div><span style="position:absolute;left:506.3px;top:389.4px;line-height:20px;font-size:14px;font-weight:700;color:#fff;white-space:pre;letter-spacing:0.13px;z-index:2;">Assignments</span><div style="position:absolute;left:611.35px;top:379.7px;width:77.25px;height:38.7px;background:#eef4f9;border:1.8px solid #c6d2e8;box-sizing:border-box;border-radius:4px 4px 0 0;z-index:1;"></div><span style="position:absolute;left:626.0px;top:389.4px;line-height:20px;font-size:14px;font-weight:700;color:#0c0c0c;white-space:pre;letter-spacing:0.406px;z-index:2;">Orders</span><div style="position:absolute;left:689.1px;top:379.7px;width:133.1px;height:38.7px;background:#eef4f9;border:1.8px solid #c6d2e8;box-sizing:border-box;border-radius:4px 4px 0 0;z-index:1;"></div><span style="position:absolute;left:703.5px;top:389.4px;line-height:20px;font-size:14px;font-weight:700;color:#0c0c0c;white-space:pre;letter-spacing:0.658px;z-index:2;">Manufacturers</span><div style="position:absolute;left:822.9px;top:379.7px;width:131.4px;height:38.7px;background:#eef4f9;border:1.8px solid #c6d2e8;box-sizing:border-box;border-radius:4px 4px 0 0;z-index:1;"></div><span style="position:absolute;left:838.0px;top:389.4px;line-height:20px;font-size:14px;font-weight:700;color:#0c0c0c;white-space:pre;letter-spacing:0.297px;z-index:2;">Order Settings</span><div style="position:absolute;left:955.0px;top:379.7px;width:70.2px;height:38.7px;background:#eef4f9;border:1.8px solid #c6d2e8;box-sizing:border-box;border-radius:4px 4px 0 0;z-index:1;"></div><span style="position:absolute;left:969.4px;top:389.4px;line-height:20px;font-size:14px;font-weight:700;color:#0c0c0c;white-space:pre;letter-spacing:0.613px;z-index:2;">Notes</span><div style="position:absolute;left:1025.8999999999999px;top:379.7px;width:109.0px;height:38.7px;background:#eef4f9;border:1.8px solid #c6d2e8;box-sizing:border-box;border-radius:4px 4px 0 0;z-index:1;"></div><span style="position:absolute;left:1040.6px;top:389.4px;line-height:20px;font-size:14px;font-weight:700;color:#0c0c0c;white-space:pre;letter-spacing:0.432px;z-index:2;">Documents</span><div style="position:absolute;left:238.3px;top:417.5px;width:1665.8px;height:383.7px;background:#f2f7fb;border:1.8px solid #c8d4ea;box-sizing:border-box;box-shadow:0 6px 34px rgba(10,20,50,.24);"></div><div style="position:absolute;left:253.75px;top:431.75px;width:334.25px;height:40.75px;background:#fdfdfd;border:1.6px solid #d0d0d0;box-sizing:border-box;border-radius:2.5px;"></div><div style="position:absolute;left:255.3px;top:433.3px;width:225.1px;height:37.6px;background:#f5f5f5;box-shadow:inset 1px 2px 4px rgba(0,0,0,.10);"></div><div style="position:absolute;left:480.0px;top:433.0px;width:1.5px;height:38.2px;background:#d3d3d3;"></div><svg style="position:absolute;left:261.5px;top:443px;width:18px;height:18px" viewBox="0 0 18 18"><circle cx="10.3" cy="7.6" r="5.6" fill="none" stroke="#454545" stroke-width="2"/><path d="M6.300 11.700 1.900 16.200" stroke="#454545" stroke-width="2.2" stroke-linecap="round"/></svg><span style="position:absolute;left:288.8px;top:442.6px;line-height:20px;font-size:14px;font-weight:400;color:#555;white-space:pre;">Search</span><span style="position:absolute;left:496.2px;top:443.8px;line-height:20px;font-size:14px;font-weight:400;color:#1c1c1c;white-space:pre;">Advanced</span><svg style="position:absolute;left:569.5px;top:448.5px;width:11px;height:8px" viewBox="0 0 11 8"><path d="M1.2 1.6 5.5 6 9.8 1.6" fill="none" stroke="#222" stroke-width="1.9" stroke-linecap="round" stroke-linejoin="round"/></svg><div style="position:absolute;left:598.4px;top:442.8px;width:20.0px;height:19.6px;background:#fff;border:1.5px solid #7a7a7a;box-sizing:border-box;border-radius:2.5px;"></div><span style="position:absolute;left:627.5px;top:442.3px;line-height:20px;font-size:14px;font-weight:400;color:#2b2b2b;white-space:pre;letter-spacing:0.118px;">Assign Salespeople Based On Ship To Address</span><div style="position:absolute;left:1343.4px;top:436.25px;width:94.6px;height:33.15px;background:#c9c9c9;border-radius:3px 0 0 3px;"></div><svg style="position:absolute;left:1358.6px;top:447.12px;width:14.2px;height:11.6px;" viewBox="16 48 496 416" preserveAspectRatio="xMidYMid meet"><path fill="#161616" d="M40 48c-13.3 0-24 10.7-24 24v48c0 13.3 10.7 24 24 24h48c13.3 0 24-10.7 24-24V72c0-13.3-10.7-24-24-24zm152 16c-17.7 0-32 14.3-32 32s14.3 32 32 32h288c17.7 0 32-14.3 32-32s-14.3-32-32-32zm0 160c-17.7 0-32 14.3-32 32s14.3 32 32 32h288c17.7 0 32-14.3 32-32s-14.3-32-32-32zm0 160c-17.7 0-32 14.3-32 32s14.3 32 32 32h288c17.7 0 32-14.3 32-32s-14.3-32-32-32zM16 232v48c0 13.3 10.7 24 24 24h48c13.3 0 24-10.7 24-24v-48c0-13.3-10.7-24-24-24H40c-13.3 0-24 10.7-24 24m24 136c-13.3 0-24 10.7-24 24v48c0 13.3 10.7 24 24 24h48c13.3 0 24-10.7 24-24v-48c0-13.3-10.7-24-24-24z" stroke="#161616" stroke-width="26" stroke-linejoin="round"/></svg><span style="position:absolute;left:1376.9px;top:442.93px;line-height:20px;font-size:14px;font-weight:400;color:#1c1c1c;white-space:pre;letter-spacing:0.281px;">Ship To</span><div style="position:absolute;left:1438px;top:436.25px;width:91.4px;height:33.15px;background:#0040ae;border-radius:0 3px 3px 0;"></div><svg style="position:absolute;left:1454.0px;top:446.02px;width:17.2px;height:13.6px;" viewBox="0 32 512 448" preserveAspectRatio="xMidYMid meet"><path fill="#fff" d="M192 64c0-17.7 14.3-32 32-32h64c17.7 0 32 14.3 32 32v64c0 17.7-14.3 32-32 32h-8v64h120c39.8 0 72 32.2 72 72v56h8c17.7 0 32 14.3 32 32v64c0 17.7-14.3 32-32 32h-64c-17.7 0-32-14.3-32-32v-64c0-17.7 14.3-32 32-32h8v-56c0-13.3-10.7-24-24-24H280v80h8c17.7 0 32 14.3 32 32v64c0 17.7-14.3 32-32 32h-64c-17.7 0-32-14.3-32-32v-64c0-17.7 14.3-32 32-32h8v-80H112c-13.3 0-24 10.7-24 24v56h8c17.7 0 32 14.3 32 32v64c0 17.7-14.3 32-32 32H32c-17.7 0-32-14.3-32-32v-64c0-17.7 14.3-32 32-32h8v-56c0-39.8 32.2-72 72-72h120v-64h-8c-17.7 0-32-14.3-32-32z" stroke="#fff" stroke-width="14" stroke-linejoin="round"/></svg><span style="position:absolute;left:1475.3px;top:442.93px;line-height:20px;font-size:14px;font-weight:400;color:#fff;white-space:pre;letter-spacing:0.388px;">Bill To</span><div style="position:absolute;left:1539.4px;top:436.25px;width:233.6px;height:33.15px;background:#c9c9c9;border-radius:3px;"></div><div style="position:absolute;left:1539.4px;top:436.25px;width:76.2px;height:33.15px;background:#0040ae;border-radius:3px 0 0 3px;"></div><svg style="position:absolute;left:1546.7px;top:448.53px;width:12.2px;height:8.8px" viewBox="0 0 12.2 8.8"><path d="M0.8 4.5760000000000005L4.3919999999999995 7.5600000000000005L11.399999999999999 1.0" fill="none" stroke="#fff" stroke-width="2.0" stroke-linecap="butt" stroke-linejoin="miter"/></svg><span style="position:absolute;left:1566.3px;top:442.93px;line-height:20px;font-size:14px;font-weight:400;color:#fff;white-space:pre;letter-spacing:0.163px;">Active</span><svg style="position:absolute;left:1624.7px;top:448.42px;width:9.2px;height:9.2px" viewBox="0 0 9.2 9.2"><path d="M0.798 0.798L8.402 8.402M8.402 0.798L0.798 8.402" fill="none" stroke="#161616" stroke-width="2.1" stroke-linecap="butt" stroke-linejoin="miter"/></svg><span style="position:absolute;left:1642.5px;top:442.93px;line-height:20px;font-size:14px;font-weight:400;color:#1c1c1c;white-space:pre;letter-spacing:0.12px;">Lead</span><svg style="position:absolute;left:1693.5px;top:448.42px;width:9.2px;height:9.2px" viewBox="0 0 9.2 9.2"><path d="M0.798 0.798L8.402 8.402M8.402 0.798L0.798 8.402" fill="none" stroke="#161616" stroke-width="2.1" stroke-linecap="butt" stroke-linejoin="miter"/></svg><span style="position:absolute;left:1710.6px;top:442.93px;line-height:20px;font-size:14px;font-weight:400;color:#1c1c1c;white-space:pre;letter-spacing:0.304px;">Inactive</span><div style="position:absolute;left:1783.4px;top:436.25px;width:106.3px;height:33.15px;background:#006c00;border-radius:3px;"></div><svg style="position:absolute;left:1790.6px;top:445.82px;width:13.4px;height:14.2px;" viewBox="0 0 448 480" preserveAspectRatio="xMidYMid meet"><path fill="#fff" d="M256 32c0-17.7-14.3-32-32-32s-32 14.3-32 32v210.7l-41.4-41.4c-12.5-12.5-32.8-12.5-45.3 0s-12.5 32.8 0 45.3l96 96c12.5 12.5 32.8 12.5 45.3 0l96-96c12.5-12.5 12.5-32.8 0-45.3s-32.8-12.5-45.3 0L256 242.7zM64 320c-35.3 0-64 28.7-64 64v32c0 35.3 28.7 64 64 64h320c35.3 0 64-28.7 64-64v-32c0-35.3-28.7-64-64-64h-46.9l-56.6 56.6c-31.2 31.2-81.9 31.2-113.1 0L110.9 320zm304 56a24 24 0 1 1 0 48 24 24 0 1 1 0-48" stroke="#fff" stroke-width="16" stroke-linejoin="round"/></svg><span style="position:absolute;left:1812.8px;top:442.93px;line-height:20px;font-size:14px;font-weight:400;color:#fff;white-space:pre;letter-spacing:0.359px;">Export All</span><div style="position:absolute;left:240.5px;top:488.2px;width:1662.0px;height:63.2px;background:#fff;"></div><div style="position:absolute;left:345.0px;top:488.2px;width:374.7px;height:31.1px;background:#f1f1f1;"></div><div style="position:absolute;left:240.5px;top:487.7px;width:1662.0px;height:1.0px;background:#d8e0e8;"></div><div style="position:absolute;left:240.5px;top:518.8px;width:1662.0px;height:1.0px;background:#d8e0e8;"></div><div style="position:absolute;left:240.5px;top:550.9px;width:1662.0px;height:1.0px;background:#d8e0e8;"></div><div style="position:absolute;left:344.5px;top:488.2px;width:1.0px;height:31.1px;background:#d8e0e8;"></div><div style="position:absolute;left:1794.5px;top:488.2px;width:1.0px;height:31.1px;background:#d8e0e8;"></div><div style="position:absolute;left:288.25px;top:519.3px;width:1.0px;height:32.1px;background:#d8e0e8;"></div><div style="position:absolute;left:344.5px;top:519.3px;width:1.0px;height:32.1px;background:#d8e0e8;"></div><div style="position:absolute;left:719.2px;top:519.3px;width:1.0px;height:32.1px;background:#d8e0e8;"></div><div style="position:absolute;left:968.25px;top:519.3px;width:1.0px;height:32.1px;background:#d8e0e8;"></div><div style="position:absolute;left:1341.4px;top:519.3px;width:1.0px;height:32.1px;background:#d8e0e8;"></div><div style="position:absolute;left:1466.4px;top:519.3px;width:1.0px;height:32.1px;background:#d8e0e8;"></div><div style="position:absolute;left:1794.5px;top:519.3px;width:1.0px;height:32.1px;background:#d8e0e8;"></div><div style="position:absolute;left:299.25px;top:494.2px;width:20.35px;height:20.3px;background:#fff;border:1.5px solid #7a7a7a;box-sizing:border-box;border-radius:2.5px;"></div><span style="position:absolute;left:355.75px;top:493.6px;line-height:20px;font-size:14px;font-weight:700;color:#0c0c0c;white-space:pre;letter-spacing:0.527px;">Customer Name</span><svg style="position:absolute;left:482.3px;top:498.9px;width:11px;height:11.2px" viewBox="0 0 11 11.2"><path d="M2.9 10.4V1.2M.9 3.1 2.9 1 4.9 3.1M8.1 .8v9.2M6.1 8.1 8.1 10.2 10.1 8.100" fill="none" stroke="#1a1a1a" stroke-width="1.35" stroke-linecap="round" stroke-linejoin="round"/></svg><span style="position:absolute;left:729.7px;top:493.6px;line-height:20px;font-size:14px;font-weight:700;color:#0c0c0c;white-space:pre;letter-spacing:0.073px;">Salesperson</span><span style="position:absolute;left:979.25px;top:493.6px;line-height:20px;font-size:14px;font-weight:700;color:#0c0c0c;white-space:pre;letter-spacing:-0.016px;">Address</span><svg style="position:absolute;left:1047.3px;top:498.9px;width:11px;height:11.2px" viewBox="0 0 11 11.2"><path d="M2.9 10.4V1.2M.9 3.1 2.9 1 4.9 3.1M8.1 .8v9.2M6.1 8.1 8.1 10.2 10.1 8.100" fill="none" stroke="#1a1a1a" stroke-width="1.35" stroke-linecap="round" stroke-linejoin="round"/></svg><span style="position:absolute;left:1351.9px;top:493.6px;line-height:20px;font-size:14px;font-weight:700;color:#0c0c0c;white-space:pre;letter-spacing:0.284px;">Active</span><span style="position:absolute;left:1476.9px;top:493.6px;line-height:20px;font-size:14px;font-weight:700;color:#0c0c0c;white-space:pre;letter-spacing:0.217px;">Division</span><svg style="position:absolute;left:249.5px;top:531.2px;width:11.1px;height:7.6px" viewBox="0 0 11.1 7.6"><path d="M1.1 6.5L5.55 1.375L10.0 6.5" fill="none" stroke="#0f5cd8" stroke-width="2.2" stroke-linecap="round" stroke-linejoin="round"/></svg><div style="position:absolute;left:299.25px;top:525.0px;width:20.35px;height:20.4px;background:#fff;border:1.5px solid #7a7a7a;box-sizing:border-box;border-radius:2.5px;"></div><span style="position:absolute;left:355.75px;top:524.6px;line-height:20px;font-size:14px;font-weight:700;color:#0c0c0c;white-space:pre;letter-spacing:0.173px;">12345 Test Five</span><span style="position:absolute;left:730.3px;top:524.6px;line-height:20px;font-size:14px;font-weight:400;color:#2b2b2b;white-space:pre;letter-spacing:0.262px;">Brandon Copsey</span><span style="position:absolute;left:978.5px;top:524.6px;line-height:20px;font-size:14px;font-weight:400;color:#2b2b2b;white-space:pre;letter-spacing:0.057px;">12345 , Schenectady, NY , 12345</span><span style="position:absolute;left:1352.2px;top:524.6px;line-height:20px;font-size:14px;font-weight:400;color:#2b2b2b;white-space:pre;letter-spacing:-0.234px;">Yes</span><span style="position:absolute;left:1476.9px;top:524.6px;line-height:20px;font-size:14px;font-weight:400;color:#2b2b2b;white-space:pre;letter-spacing:0.309px;">ONE- Teps Test Division and Territory</span><div style="position:absolute;left:1809.5px;top:522.3px;width:24.2px;height:24.4px;background:#0f6ee0;border-radius:2.2px;opacity:1;"></div><svg style="position:absolute;left:1814.7px;top:527.2px;width:13.8px;height:14.0px;opacity:1;" viewBox="0 5.28 506.73 506.73" preserveAspectRatio="xMidYMid meet"><path fill="#fff" d="M471.6 21.7c-21.9-21.9-57.3-21.9-79.2 0L368 46.1l97.9 97.9 24.4-24.4c21.9-21.9 21.9-57.3 0-79.2zm-299.2 220c-6.1 6.1-10.8 13.6-13.5 21.9l-29.6 88.8c-2.9 8.6-.6 18.1 5.8 24.6s15.9 8.7 24.6 5.8l88.8-29.6c8.2-2.7 15.7-7.4 21.9-13.5L432 177.9 334.1 80zM96 64c-53 0-96 43-96 96v256c0 53 43 96 96 96h256c53 0 96-43 96-96v-96c0-17.7-14.3-32-32-32s-32 14.3-32 32v96c0 17.7-14.3 32-32 32H96c-17.7 0-32-14.3-32-32V160c0-17.7 14.3-32 32-32h96c17.7 0 32-14.3 32-32s-14.3-32-32-32z"/></svg><div style="position:absolute;left:1843.1px;top:522.3px;width:24.6px;height:24.4px;background:#a20609;border-radius:2.2px;opacity:1;"></div><svg style="position:absolute;left:1848.0px;top:526.9px;width:14.8px;height:14.6px;opacity:1;" viewBox="0 -16 448 528" preserveAspectRatio="xMidYMid meet"><path fill="#fff" d="M136.7 5.9C141.1-7.2 153.3-16 167.1-16H281c13.8 0 26 8.8 30.4 21.9L320 32h96c17.7 0 32 14.3 32 32s-14.3 32-32 32H32C14.3 96 0 81.7 0 64s14.3-32 32-32h96zM32 144h384v304c0 35.3-28.7 64-64 64H96c-35.3 0-64-28.7-64-64zm88 64c-13.3 0-24 10.7-24 24v192c0 13.3 10.7 24 24 24s24-10.7 24-24V232c0-13.3-10.7-24-24-24m104 0c-13.3 0-24 10.7-24 24v192c0 13.3 10.7 24 24 24s24-10.7 24-24V232c0-13.3-10.7-24-24-24m104 0c-13.3 0-24 10.7-24 24v192c0 13.3 10.7 24 24 24s24-10.7 24-24V232c0-13.3-10.7-24-24-24"/></svg><div style="position:absolute;left:240.5px;top:551.4px;width:39.5px;height:194.8px;background:#efefef;"></div><div style="position:absolute;left:280.0px;top:551.4px;width:1622.5px;height:28.5px;background:linear-gradient(to right,#0040ae 0,#0040ae 378.0px,#2a80c2 378.0px,#2a80c2 713.25px,#0040ae 713.25px);"></div><div style="position:absolute;left:1814.2px;top:551.4px;width:1.0px;height:28.5px;background:rgba(255,255,255,.35);"></div><span style="position:absolute;left:290.5px;top:555.5px;line-height:20px;font-size:14px;font-weight:700;color:#fff;white-space:pre;letter-spacing:0.331px;">Ship To Name</span><span style="position:absolute;left:689.25px;top:555.5px;line-height:20px;font-size:14px;font-weight:700;color:#fff;white-space:pre;letter-spacing:0.073px;">Salesperson</span><span style="position:absolute;left:988.75px;top:555.5px;line-height:20px;font-size:14px;font-weight:700;color:#fff;white-space:pre;letter-spacing:0.025px;">Ship To Address</span><span style="position:absolute;left:1677.8px;top:555.5px;line-height:20px;font-size:14px;font-weight:700;color:#fff;white-space:pre;letter-spacing:0.284px;">Active</span><div style="position:absolute;left:280.0px;top:579.9px;width:1622.5px;height:33.5px;background:#fff;"></div><div style="position:absolute;left:280.0px;top:612.9px;width:1622.5px;height:1.0px;background:#d8e0e8;"></div><div style="position:absolute;left:679.0px;top:579.9px;width:1.0px;height:33.5px;background:#d8e0e8;"></div><div style="position:absolute;left:978.25px;top:579.9px;width:1.0px;height:33.5px;background:#d8e0e8;"></div><div style="position:absolute;left:1667.3px;top:579.9px;width:1.0px;height:33.5px;background:#d8e0e8;"></div><div style="position:absolute;left:1814.2px;top:579.9px;width:1.0px;height:33.5px;background:#d8e0e8;"></div><span style="position:absolute;left:290.5px;top:586.95px;line-height:20px;font-size:14px;font-weight:400;color:#2b2b2b;white-space:pre;letter-spacing:0.349px;">Ionic Test</span><svg style="position:absolute;left:356.2px;top:589.2px;width:15.2px;height:14.6px;z-index:60;" viewBox="12.92 -32 550.17 525.6" preserveAspectRatio="xMidYMid meet"><path fill="#c4430d" d="M309.5-18.9c-4.1-8-12.4-13.1-21.4-13.1s-17.3 5.1-21.4 13.1l-73.6 144.2-159.9 25.4c-8.9 1.4-16.3 7.7-19.1 16.3s-.5 18 5.8 24.4l114.4 114.5-25.2 159.9c-1.4 8.9 2.3 17.9 9.6 23.2s16.9 6.1 25 2l144.4-73.4L432.4 491c8 4.1 17.7 3.3 25-2s11-14.2 9.6-23.2l-25.3-159.9 114.4-114.5c6.4-6.4 8.6-15.8 5.8-24.4s-10.1-14.9-19.1-16.3L383 125.3z"/></svg><span style="position:absolute;left:689.5px;top:586.95px;line-height:20px;font-size:14px;font-weight:400;color:#2b2b2b;white-space:pre;letter-spacing:0.262px;">Brandon Copsey</span><span style="position:absolute;left:988.6px;top:586.95px;line-height:20px;font-size:14px;font-weight:400;color:#2b2b2b;white-space:pre;letter-spacing:0.076px;">1 main , Bisbee, AZ , 85683</span><span style="position:absolute;left:1678.0px;top:586.95px;line-height:20px;font-size:14px;font-weight:400;color:#2b2b2b;white-space:pre;letter-spacing:-0.234px;">Yes</span><div style="position:absolute;left:1829.8px;top:584.3px;width:23.7px;height:24.1px;background:#5ba7e6;border-radius:2.2px;opacity:1;"></div><svg style="position:absolute;left:1835.0px;top:589.2px;width:13.3px;height:13.7px;opacity:1;" viewBox="0 5.28 506.73 506.73" preserveAspectRatio="xMidYMid meet"><path fill="#fff" d="M471.6 21.7c-21.9-21.9-57.3-21.9-79.2 0L368 46.1l97.9 97.9 24.4-24.4c21.9-21.9 21.9-57.3 0-79.2zm-299.2 220c-6.1 6.1-10.8 13.6-13.5 21.9l-29.6 88.8c-2.9 8.6-.6 18.1 5.8 24.6s15.9 8.7 24.6 5.8l88.8-29.6c8.2-2.7 15.7-7.4 21.9-13.5L432 177.9 334.1 80zM96 64c-53 0-96 43-96 96v256c0 53 43 96 96 96h256c53 0 96-43 96-96v-96c0-17.7-14.3-32-32-32s-32 14.3-32 32v96c0 17.7-14.3 32-32 32H96c-17.7 0-32-14.3-32-32V160c0-17.7 14.3-32 32-32h96c17.7 0 32-14.3 32-32s-14.3-32-32-32z"/></svg><div style="position:absolute;left:1863.6px;top:584.3px;width:23.8px;height:24.1px;background:#d0435a;border-radius:2.2px;opacity:1;"></div><svg style="position:absolute;left:1868.5px;top:588.9px;width:14.0px;height:14.3px;opacity:1;" viewBox="0 -16 448 528" preserveAspectRatio="xMidYMid meet"><path fill="#fff" d="M136.7 5.9C141.1-7.2 153.3-16 167.1-16H281c13.8 0 26 8.8 30.4 21.9L320 32h96c17.7 0 32 14.3 32 32s-14.3 32-32 32H32C14.3 96 0 81.7 0 64s14.3-32 32-32h96zM32 144h384v304c0 35.3-28.7 64-64 64H96c-35.3 0-64-28.7-64-64zm88 64c-13.3 0-24 10.7-24 24v192c0 13.3 10.7 24 24 24s24-10.7 24-24V232c0-13.3-10.7-24-24-24m104 0c-13.3 0-24 10.7-24 24v192c0 13.3 10.7 24 24 24s24-10.7 24-24V232c0-13.3-10.7-24-24-24m104 0c-13.3 0-24 10.7-24 24v192c0 13.3 10.7 24 24 24s24-10.7 24-24V232c0-13.3-10.7-24-24-24"/></svg><div style="position:absolute;left:280.0px;top:613.4px;width:1622.5px;height:32.9px;background:#f2f7fb;"></div><div style="position:absolute;left:280.0px;top:645.8px;width:1622.5px;height:1.0px;background:#d8e0e8;"></div><div style="position:absolute;left:679.0px;top:613.4px;width:1.0px;height:32.9px;background:#d8e0e8;"></div><div style="position:absolute;left:978.25px;top:613.4px;width:1.0px;height:32.9px;background:#d8e0e8;"></div><div style="position:absolute;left:1667.3px;top:613.4px;width:1.0px;height:32.9px;background:#d8e0e8;"></div><div style="position:absolute;left:1814.2px;top:613.4px;width:1.0px;height:32.9px;background:#d8e0e8;"></div><span style="position:absolute;left:290.5px;top:620.95px;line-height:20px;font-size:14px;font-weight:400;color:#2b2b2b;white-space:pre;letter-spacing:0.255px;">12345 Test Three</span><span style="position:absolute;left:689.5px;top:620.95px;line-height:20px;font-size:14px;font-weight:400;color:#2b2b2b;white-space:pre;letter-spacing:0.262px;">Brandon Copsey</span><span style="position:absolute;left:988.6px;top:620.95px;line-height:20px;font-size:14px;font-weight:400;color:#2b2b2b;white-space:pre;letter-spacing:0.057px;">12345 , Schenectady, NY , 12345</span><span style="position:absolute;left:1678.0px;top:620.95px;line-height:20px;font-size:14px;font-weight:400;color:#2b2b2b;white-space:pre;letter-spacing:-0.234px;">Yes</span><div style="position:absolute;left:1829.8px;top:617.8px;width:23.7px;height:24.1px;background:#5ba7e6;border-radius:2.2px;opacity:1;"></div><svg style="position:absolute;left:1835.0px;top:622.7px;width:13.3px;height:13.7px;opacity:1;" viewBox="0 5.28 506.73 506.73" preserveAspectRatio="xMidYMid meet"><path fill="#fff" d="M471.6 21.7c-21.9-21.9-57.3-21.9-79.2 0L368 46.1l97.9 97.9 24.4-24.4c21.9-21.9 21.9-57.3 0-79.2zm-299.2 220c-6.1 6.1-10.8 13.6-13.5 21.9l-29.6 88.8c-2.9 8.6-.6 18.1 5.8 24.6s15.9 8.7 24.6 5.8l88.8-29.6c8.2-2.7 15.7-7.4 21.9-13.5L432 177.9 334.1 80zM96 64c-53 0-96 43-96 96v256c0 53 43 96 96 96h256c53 0 96-43 96-96v-96c0-17.7-14.3-32-32-32s-32 14.3-32 32v96c0 17.7-14.3 32-32 32H96c-17.7 0-32-14.3-32-32V160c0-17.7 14.3-32 32-32h96c17.7 0 32-14.3 32-32s-14.3-32-32-32z"/></svg><div style="position:absolute;left:1863.6px;top:617.8px;width:23.8px;height:24.1px;background:#d0435a;border-radius:2.2px;opacity:1;"></div><svg style="position:absolute;left:1868.5px;top:622.4px;width:14.0px;height:14.3px;opacity:1;" viewBox="0 -16 448 528" preserveAspectRatio="xMidYMid meet"><path fill="#fff" d="M136.7 5.9C141.1-7.2 153.3-16 167.1-16H281c13.8 0 26 8.8 30.4 21.9L320 32h96c17.7 0 32 14.3 32 32s-14.3 32-32 32H32C14.3 96 0 81.7 0 64s14.3-32 32-32h96zM32 144h384v304c0 35.3-28.7 64-64 64H96c-35.3 0-64-28.7-64-64zm88 64c-13.3 0-24 10.7-24 24v192c0 13.3 10.7 24 24 24s24-10.7 24-24V232c0-13.3-10.7-24-24-24m104 0c-13.3 0-24 10.7-24 24v192c0 13.3 10.7 24 24 24s24-10.7 24-24V232c0-13.3-10.7-24-24-24m104 0c-13.3 0-24 10.7-24 24v192c0 13.3 10.7 24 24 24s24-10.7 24-24V232c0-13.3-10.7-24-24-24"/></svg><div style="position:absolute;left:280.0px;top:646.3px;width:1622.5px;height:33.7px;background:#fff;"></div><div style="position:absolute;left:280.0px;top:679.5px;width:1622.5px;height:1.0px;background:#d8e0e8;"></div><div style="position:absolute;left:679.0px;top:646.3px;width:1.0px;height:33.7px;background:#d8e0e8;"></div><div style="position:absolute;left:978.25px;top:646.3px;width:1.0px;height:33.7px;background:#d8e0e8;"></div><div style="position:absolute;left:1667.3px;top:646.3px;width:1.0px;height:33.7px;background:#d8e0e8;"></div><div style="position:absolute;left:1814.2px;top:646.3px;width:1.0px;height:33.7px;background:#d8e0e8;"></div><span style="position:absolute;left:290.5px;top:653.95px;line-height:20px;font-size:14px;font-weight:400;color:#2b2b2b;white-space:pre;letter-spacing:0.256px;">12345 Test Four</span><span style="position:absolute;left:689.5px;top:653.95px;line-height:20px;font-size:14px;font-weight:400;color:#2b2b2b;white-space:pre;letter-spacing:0.262px;">Brandon Copsey</span><span style="position:absolute;left:988.6px;top:653.95px;line-height:20px;font-size:14px;font-weight:400;color:#2b2b2b;white-space:pre;letter-spacing:0.105px;">12345 Test Four , Schenectady, NY , 12345</span><span style="position:absolute;left:1678.0px;top:653.95px;line-height:20px;font-size:14px;font-weight:400;color:#2b2b2b;white-space:pre;letter-spacing:-0.234px;">Yes</span><div style="position:absolute;left:1829.8px;top:650.6999999999999px;width:23.7px;height:24.1px;background:#5ba7e6;border-radius:2.2px;opacity:1;"></div><svg style="position:absolute;left:1835.0px;top:655.6px;width:13.3px;height:13.7px;opacity:1;" viewBox="0 5.28 506.73 506.73" preserveAspectRatio="xMidYMid meet"><path fill="#fff" d="M471.6 21.7c-21.9-21.9-57.3-21.9-79.2 0L368 46.1l97.9 97.9 24.4-24.4c21.9-21.9 21.9-57.3 0-79.2zm-299.2 220c-6.1 6.1-10.8 13.6-13.5 21.9l-29.6 88.8c-2.9 8.6-.6 18.1 5.8 24.6s15.9 8.7 24.6 5.8l88.8-29.6c8.2-2.7 15.7-7.4 21.9-13.5L432 177.9 334.1 80zM96 64c-53 0-96 43-96 96v256c0 53 43 96 96 96h256c53 0 96-43 96-96v-96c0-17.7-14.3-32-32-32s-32 14.3-32 32v96c0 17.7-14.3 32-32 32H96c-17.7 0-32-14.3-32-32V160c0-17.7 14.3-32 32-32h96c17.7 0 32-14.3 32-32s-14.3-32-32-32z"/></svg><div style="position:absolute;left:1863.6px;top:650.6999999999999px;width:23.8px;height:24.1px;background:#d0435a;border-radius:2.2px;opacity:1;"></div><svg style="position:absolute;left:1868.5px;top:655.3px;width:14.0px;height:14.3px;opacity:1;" viewBox="0 -16 448 528" preserveAspectRatio="xMidYMid meet"><path fill="#fff" d="M136.7 5.9C141.1-7.2 153.3-16 167.1-16H281c13.8 0 26 8.8 30.4 21.9L320 32h96c17.7 0 32 14.3 32 32s-14.3 32-32 32H32C14.3 96 0 81.7 0 64s14.3-32 32-32h96zM32 144h384v304c0 35.3-28.7 64-64 64H96c-35.3 0-64-28.7-64-64zm88 64c-13.3 0-24 10.7-24 24v192c0 13.3 10.7 24 24 24s24-10.7 24-24V232c0-13.3-10.7-24-24-24m104 0c-13.3 0-24 10.7-24 24v192c0 13.3 10.7 24 24 24s24-10.7 24-24V232c0-13.3-10.7-24-24-24m104 0c-13.3 0-24 10.7-24 24v192c0 13.3 10.7 24 24 24s24-10.7 24-24V232c0-13.3-10.7-24-24-24"/></svg><div style="position:absolute;left:280.0px;top:680.0px;width:1622.5px;height:33.1px;background:#f2f7fb;"></div><div style="position:absolute;left:280.0px;top:712.6px;width:1622.5px;height:1.0px;background:#d8e0e8;"></div><div style="position:absolute;left:679.0px;top:680.0px;width:1.0px;height:33.1px;background:#d8e0e8;"></div><div style="position:absolute;left:978.25px;top:680.0px;width:1.0px;height:33.1px;background:#d8e0e8;"></div><div style="position:absolute;left:1667.3px;top:680.0px;width:1.0px;height:33.1px;background:#d8e0e8;"></div><div style="position:absolute;left:1814.2px;top:680.0px;width:1.0px;height:33.1px;background:#d8e0e8;"></div><span style="position:absolute;left:290.5px;top:686.95px;line-height:20px;font-size:14px;font-weight:400;color:#2b2b2b;white-space:pre;letter-spacing:0.112px;">12345 Test Five</span><span style="position:absolute;left:689.5px;top:686.95px;line-height:20px;font-size:14px;font-weight:400;color:#2b2b2b;white-space:pre;letter-spacing:0.262px;">Brandon Copsey</span><span style="position:absolute;left:988.6px;top:686.95px;line-height:20px;font-size:14px;font-weight:400;color:#2b2b2b;white-space:pre;letter-spacing:0.057px;">12345 , Schenectady, NY , 12345</span><span style="position:absolute;left:1678.0px;top:686.95px;line-height:20px;font-size:14px;font-weight:400;color:#2b2b2b;white-space:pre;letter-spacing:-0.234px;">Yes</span><div style="position:absolute;left:1829.8px;top:684.4px;width:23.7px;height:24.1px;background:#5ba7e6;border-radius:2.2px;opacity:1;"></div><svg style="position:absolute;left:1835.0px;top:689.3px;width:13.3px;height:13.7px;opacity:1;" viewBox="0 5.28 506.73 506.73" preserveAspectRatio="xMidYMid meet"><path fill="#fff" d="M471.6 21.7c-21.9-21.9-57.3-21.9-79.2 0L368 46.1l97.9 97.9 24.4-24.4c21.9-21.9 21.9-57.3 0-79.2zm-299.2 220c-6.1 6.1-10.8 13.6-13.5 21.9l-29.6 88.8c-2.9 8.6-.6 18.1 5.8 24.6s15.9 8.7 24.6 5.8l88.8-29.6c8.2-2.7 15.7-7.4 21.9-13.5L432 177.9 334.1 80zM96 64c-53 0-96 43-96 96v256c0 53 43 96 96 96h256c53 0 96-43 96-96v-96c0-17.7-14.3-32-32-32s-32 14.3-32 32v96c0 17.7-14.3 32-32 32H96c-17.7 0-32-14.3-32-32V160c0-17.7 14.3-32 32-32h96c17.7 0 32-14.3 32-32s-14.3-32-32-32z"/></svg><div style="position:absolute;left:1863.6px;top:684.4px;width:23.8px;height:24.1px;background:#d0435a;border-radius:2.2px;opacity:1;"></div><svg style="position:absolute;left:1868.5px;top:689.0px;width:14.0px;height:14.3px;opacity:1;" viewBox="0 -16 448 528" preserveAspectRatio="xMidYMid meet"><path fill="#fff" d="M136.7 5.9C141.1-7.2 153.3-16 167.1-16H281c13.8 0 26 8.8 30.4 21.9L320 32h96c17.7 0 32 14.3 32 32s-14.3 32-32 32H32C14.3 96 0 81.7 0 64s14.3-32 32-32h96zM32 144h384v304c0 35.3-28.7 64-64 64H96c-35.3 0-64-28.7-64-64zm88 64c-13.3 0-24 10.7-24 24v192c0 13.3 10.7 24 24 24s24-10.7 24-24V232c0-13.3-10.7-24-24-24m104 0c-13.3 0-24 10.7-24 24v192c0 13.3 10.7 24 24 24s24-10.7 24-24V232c0-13.3-10.7-24-24-24m104 0c-13.3 0-24 10.7-24 24v192c0 13.3 10.7 24 24 24s24-10.7 24-24V232c0-13.3-10.7-24-24-24"/></svg><div style="position:absolute;left:280.0px;top:713.1px;width:1622.5px;height:33.1px;background:#fff;"></div><div style="position:absolute;left:280.0px;top:745.7px;width:1622.5px;height:1.0px;background:#d8e0e8;"></div><div style="position:absolute;left:679.0px;top:713.1px;width:1.0px;height:33.1px;background:#d8e0e8;"></div><div style="position:absolute;left:978.25px;top:713.1px;width:1.0px;height:33.1px;background:#d8e0e8;"></div><div style="position:absolute;left:1667.3px;top:713.1px;width:1.0px;height:33.1px;background:#d8e0e8;"></div><div style="position:absolute;left:1814.2px;top:713.1px;width:1.0px;height:33.1px;background:#d8e0e8;"></div><span style="position:absolute;left:290.5px;top:720.95px;line-height:20px;font-size:14px;font-weight:400;color:#2b2b2b;white-space:pre;letter-spacing:0.499px;">minnesota test</span><span style="position:absolute;left:689.5px;top:720.95px;line-height:20px;font-size:14px;font-weight:400;color:#2b2b2b;white-space:pre;letter-spacing:0.262px;">Brandon Copsey</span><span style="position:absolute;left:988.6px;top:720.95px;line-height:20px;font-size:14px;font-weight:400;color:#2b2b2b;white-space:pre;letter-spacing:0.192px;">55555 , Young America, MN , 55555</span><span style="position:absolute;left:1678.0px;top:720.95px;line-height:20px;font-size:14px;font-weight:400;color:#2b2b2b;white-space:pre;letter-spacing:-0.234px;">Yes</span><div style="position:absolute;left:1829.8px;top:717.5px;width:23.7px;height:24.1px;background:#5ba7e6;border-radius:2.2px;opacity:1;"></div><svg style="position:absolute;left:1835.0px;top:722.4px;width:13.3px;height:13.7px;opacity:1;" viewBox="0 5.28 506.73 506.73" preserveAspectRatio="xMidYMid meet"><path fill="#fff" d="M471.6 21.7c-21.9-21.9-57.3-21.9-79.2 0L368 46.1l97.9 97.9 24.4-24.4c21.9-21.9 21.9-57.3 0-79.2zm-299.2 220c-6.1 6.1-10.8 13.6-13.5 21.9l-29.6 88.8c-2.9 8.6-.6 18.1 5.8 24.6s15.9 8.7 24.6 5.8l88.8-29.6c8.2-2.7 15.7-7.4 21.9-13.5L432 177.9 334.1 80zM96 64c-53 0-96 43-96 96v256c0 53 43 96 96 96h256c53 0 96-43 96-96v-96c0-17.7-14.3-32-32-32s-32 14.3-32 32v96c0 17.7-14.3 32-32 32H96c-17.7 0-32-14.3-32-32V160c0-17.7 14.3-32 32-32h96c17.7 0 32-14.3 32-32s-14.3-32-32-32z"/></svg><div style="position:absolute;left:1863.6px;top:717.5px;width:23.8px;height:24.1px;background:#d0435a;border-radius:2.2px;opacity:1;"></div><svg style="position:absolute;left:1868.5px;top:722.1px;width:14.0px;height:14.3px;opacity:1;" viewBox="0 -16 448 528" preserveAspectRatio="xMidYMid meet"><path fill="#fff" d="M136.7 5.9C141.1-7.2 153.3-16 167.1-16H281c13.8 0 26 8.8 30.4 21.9L320 32h96c17.7 0 32 14.3 32 32s-14.3 32-32 32H32C14.3 96 0 81.7 0 64s14.3-32 32-32h96zM32 144h384v304c0 35.3-28.7 64-64 64H96c-35.3 0-64-28.7-64-64zm88 64c-13.3 0-24 10.7-24 24v192c0 13.3 10.7 24 24 24s24-10.7 24-24V232c0-13.3-10.7-24-24-24m104 0c-13.3 0-24 10.7-24 24v192c0 13.3 10.7 24 24 24s24-10.7 24-24V232c0-13.3-10.7-24-24-24m104 0c-13.3 0-24 10.7-24 24v192c0 13.3 10.7 24 24 24s24-10.7 24-24V232c0-13.3-10.7-24-24-24"/></svg><span style="position:absolute;left:249.8px;top:764.4px;line-height:20px;font-size:14px;font-weight:400;color:#2b2b2b;white-space:pre;letter-spacing:0.401px;">Total :</span><span style="position:absolute;left:303.6px;top:764.4px;line-height:20px;font-size:14px;font-weight:400;color:#2b2b2b;white-space:pre;letter-spacing:0.219px;">1</span><div style="position:absolute;left:899px;top:756.0px;width:36px;height:36.0px;border:1px solid #dbe2e8;box-sizing:border-box;border-radius:50%;background:#f7f9fb;"></div><svg style="position:absolute;left:911.4px;top:769.8px;width:11.2px;height:9px" viewBox="0 0 11.2 9"><path d="M5 1.300 1.800 4.500 5 7.700M9.400 1.300 6.200 4.500 9.400 7.700" fill="none" stroke="#858585" stroke-width="2" stroke-linecap="round" stroke-linejoin="round"/></svg><div style="position:absolute;left:951.5px;top:756.0px;width:36.0px;height:36.0px;border:1px solid #dbe2e8;box-sizing:border-box;border-radius:50%;background:#f7f9fb;"></div><svg style="position:absolute;left:963.9px;top:769.8px;width:11.2px;height:9px" viewBox="0 0 11.2 9"><path d="M7.200 1.300 4 4.500 7.200 7.700" fill="none" stroke="#858585" stroke-width="2" stroke-linecap="round" stroke-linejoin="round"/></svg><div style="position:absolute;left:1052px;top:756.0px;width:36px;height:36.0px;border:1px solid #dbe2e8;box-sizing:border-box;border-radius:50%;background:#f7f9fb;"></div><svg style="position:absolute;left:1064.4px;top:769.8px;width:11.2px;height:9px" viewBox="0 0 11.2 9"><path d="M4 1.300 7.200 4.500 4 7.700" fill="none" stroke="#858585" stroke-width="2" stroke-linecap="round" stroke-linejoin="round"/></svg><div style="position:absolute;left:1104px;top:756.0px;width:36px;height:36.0px;border:1px solid #dbe2e8;box-sizing:border-box;border-radius:50%;background:#f7f9fb;"></div><svg style="position:absolute;left:1116.4px;top:769.8px;width:11.2px;height:9px" viewBox="0 0 11.2 9"><path d="M1.800 1.300 5 4.500 1.800 7.700M6.200 1.300 9.400 4.500 6.200 7.700" fill="none" stroke="#858585" stroke-width="2" stroke-linecap="round" stroke-linejoin="round"/></svg><div style="position:absolute;left:1003.2px;top:758.1px;width:32.6px;height:32.6px;background:#0040ae;border-radius:50%;"></div><span style="position:absolute;left:1015.4px;top:764.4px;line-height:22px;font-size:14.5px;font-weight:400;color:#fff;white-space:pre;">1</span><span style="position:absolute;left:1728.75px;top:765.3px;line-height:20px;font-size:14px;font-weight:400;color:#2b2b2b;white-space:pre;letter-spacing:0.053px;">Per page:</span><div style="position:absolute;left:1797.5px;top:759.0px;width:97.5px;height:31.3px;background:#fafafa;border:1px solid #cbd2da;box-sizing:border-box;border-radius:4px;"></div><span style="position:absolute;left:1823.9px;top:764.7px;line-height:22px;font-size:15.5px;font-weight:400;color:#222;white-space:pre;">20</span><svg style="position:absolute;left:1875.4px;top:770px;width:10.6px;height:7.6px" viewBox="0 0 10.6 7.6"><path d="M1.4 1h7.800L5.300 6.200z" fill="none" stroke="#111" stroke-width="1.7" stroke-linejoin="round"/></svg></main><div style="position:absolute;left:658px;top:475.8px;width:335.25px;height:282.2px;border-radius:2.5px;box-shadow:0 0 0 3000px rgba(0,0,0,0.36);z-index:50;pointer-events:none;"></div>
</body></html>
